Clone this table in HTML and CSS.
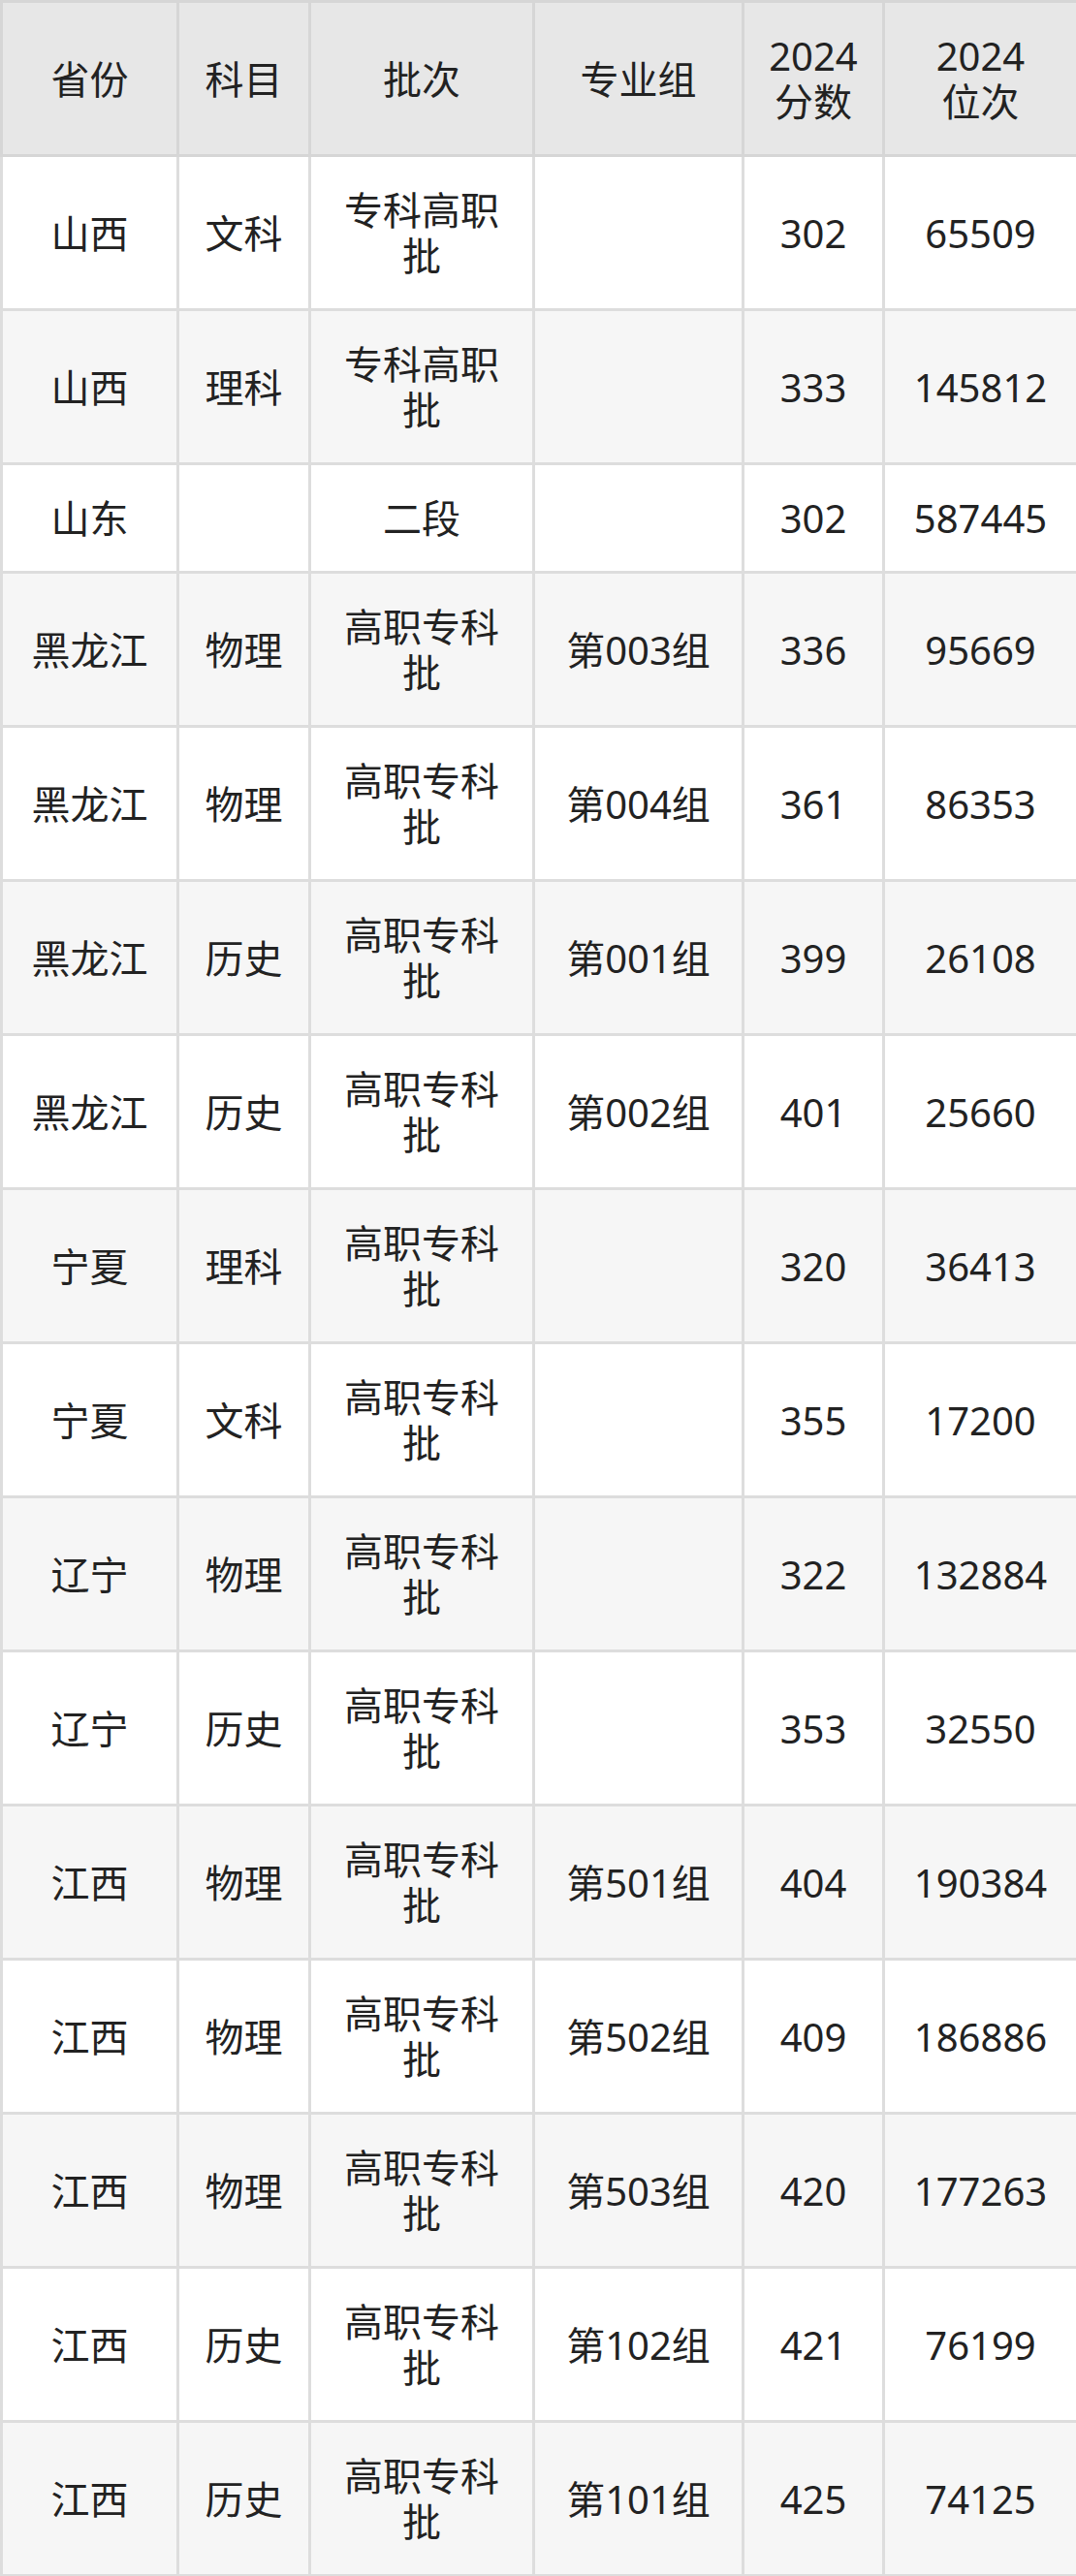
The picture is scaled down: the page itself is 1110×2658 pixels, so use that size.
FILE: index.html
```html
<!DOCTYPE html>
<html lang="zh-CN">
<head>
<meta charset="utf-8">
<title>分数线</title>
<link rel="stylesheet" href="styles.css">
</head>
<body>
<table class="score-table">
  <colgroup>
    <col class="c1"><col class="c2"><col class="c3"><col class="c4"><col class="c5"><col class="c6">
  </colgroup>
  <thead>
    <tr><th>省份</th><th>科目</th><th>批次</th><th>专业组</th><th>2024<br>分数</th><th>2024<br>位次</th></tr>
  </thead>
  <tbody>
    <tr><td>山西</td><td>文科</td><td>专科高职批</td><td></td><td>302</td><td>65509</td></tr>
    <tr><td>山西</td><td>理科</td><td>专科高职批</td><td></td><td>333</td><td>145812</td></tr>
    <tr><td>山东</td><td></td><td>二段</td><td></td><td>302</td><td>587445</td></tr>
    <tr><td>黑龙江</td><td>物理</td><td>高职专科批</td><td>第003组</td><td>336</td><td>95669</td></tr>
    <tr><td>黑龙江</td><td>物理</td><td>高职专科批</td><td>第004组</td><td>361</td><td>86353</td></tr>
    <tr><td>黑龙江</td><td>历史</td><td>高职专科批</td><td>第001组</td><td>399</td><td>26108</td></tr>
    <tr><td>黑龙江</td><td>历史</td><td>高职专科批</td><td>第002组</td><td>401</td><td>25660</td></tr>
    <tr><td>宁夏</td><td>理科</td><td>高职专科批</td><td></td><td>320</td><td>36413</td></tr>
    <tr><td>宁夏</td><td>文科</td><td>高职专科批</td><td></td><td>355</td><td>17200</td></tr>
    <tr><td>辽宁</td><td>物理</td><td>高职专科批</td><td></td><td>322</td><td>132884</td></tr>
    <tr><td>辽宁</td><td>历史</td><td>高职专科批</td><td></td><td>353</td><td>32550</td></tr>
    <tr><td>江西</td><td>物理</td><td>高职专科批</td><td>第501组</td><td>404</td><td>190384</td></tr>
    <tr><td>江西</td><td>物理</td><td>高职专科批</td><td>第502组</td><td>409</td><td>186886</td></tr>
    <tr><td>江西</td><td>物理</td><td>高职专科批</td><td>第503组</td><td>420</td><td>177263</td></tr>
    <tr><td>江西</td><td>历史</td><td>高职专科批</td><td>第102组</td><td>421</td><td>76199</td></tr>
    <tr><td>江西</td><td>历史</td><td>高职专科批</td><td>第101组</td><td>425</td><td>74125</td></tr>
  </tbody>
</table>
</body>
</html>
```

FILE: styles.css
```css
html, body {
  margin: 0;
  padding: 0;
  background: #ffffff;
}

.score-table {
  width: 1110px;
  table-layout: fixed;
  border-collapse: collapse;
  font-family: "Noto Sans", "Noto Sans CJK SC", sans-serif;
  font-size: 40px;
  line-height: 47px;
  color: #222222;
}

.c1 { width: 182px; }
.c2 { width: 136px; }
.c3 { width: 231px; }
.c4 { width: 216px; }
.c5 { width: 145px; }
.c6 { width: 200px; }

.score-table th,
.score-table td {
  border: 3px solid #dddddd;
  padding: 31px 20px;
  text-align: center;
  vertical-align: middle;
  font-weight: normal;
}

.score-table thead th {
  background: #e7e7e7;
  border-color: #d6d6d6;
}

.score-table tbody tr:nth-child(even) td {
  background: #f6f6f6;
}
```
